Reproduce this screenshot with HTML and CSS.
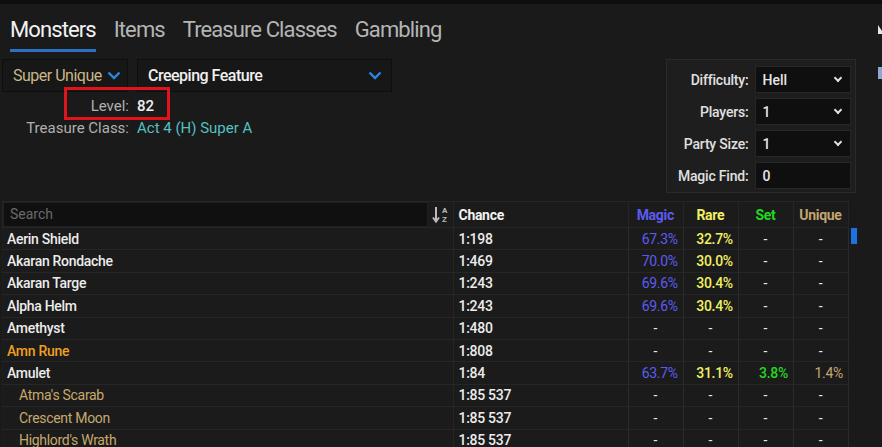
FILE: index.html
```html
<!DOCTYPE html>
<html lang="en">
  <head>
    <meta charset="UTF-8" />
    <meta name="viewport" content="width=device-width, initial-scale=1.0" />
    <title>Drop Calculator</title>
    <link rel="stylesheet" href="styles.css">
  </head>
  <body>
    <div class="topline"></div>
    <nav class="tabs">
      <a class="tab active">Monsters</a>
      <a class="tab">Items</a>
      <a class="tab">Treasure Classes</a>
      <a class="tab">Gambling</a>
    </nav>
    <div class="edge">
      <svg width="5" height="10" viewBox="0 0 5 10"><path d="M0 1 L4 7 V10 H0 Z" fill="#dfe6f0"/></svg>
      <span class="edge-box"></span>
    </div>

    <div class="top">
      <div class="monster">
        <div class="pickers">
          <div class="pick pick-type">
            <span>Super Unique</span>
            <svg width="14" height="9" viewBox="0 0 14 9"><path d="M1.5 1.5 L7 7 L12.5 1.5" fill="none" stroke="#2a86e0" stroke-width="2.4"/></svg>
          </div>
          <div class="pick pick-name">
            <span>Creeping Feature</span>
            <svg width="14" height="9" viewBox="0 0 14 9"><path d="M1.5 1.5 L7 7 L12.5 1.5" fill="none" stroke="#2a86e0" stroke-width="2.4"/></svg>
          </div>
        </div>
        <div class="info">
          <div class="info-row">
            <span class="info-label">Level:</span>
            <span class="info-val">82</span>
            <span class="mark"></span>
          </div>
          <div class="info-row">
            <span class="info-label">Treasure Class:</span>
            <span class="info-val tc">Act 4 (H) Super A</span>
          </div>
        </div>
      </div>

      <div class="settings">
        <div class="set-row">
          <label>Difficulty:</label>
          <div class="sel"><span>Hell</span><i class="chev"></i></div>
        </div>
        <div class="set-row">
          <label>Players:</label>
          <div class="sel"><span>1</span><i class="chev"></i></div>
        </div>
        <div class="set-row">
          <label>Party Size:</label>
          <div class="sel"><span>1</span><i class="chev"></i></div>
        </div>
        <div class="set-row">
          <label>Magic Find:</label>
          <div class="sel"><span>0</span></div>
        </div>
      </div>
    </div>

    <div class="results">
      <table class="drops">
        <colgroup>
          <col class="c-name"><col class="c-chance"><col class="c-q"><col class="c-q"><col class="c-q"><col class="c-q">
        </colgroup>
        <thead>
          <tr>
            <th class="search-cell">
              <div class="search-wrap">
                <div class="search">Search</div>
                <svg class="sort" width="18" height="20" viewBox="0 0 18 20">
                  <path d="M4 2 V16 M1 12.5 L4 16.5 L7 12.5" fill="none" stroke="#bbb" stroke-width="2"/>
                  <text x="10" y="8" font-size="8" font-weight="700" fill="#bbb" font-family="Roboto">A</text>
                  <text x="10" y="17" font-size="8" font-weight="700" fill="#bbb" font-family="Roboto">Z</text>
                </svg>
              </div>
            </th>
            <th class="h-chance">Chance</th>
            <th class="magic">Magic</th>
            <th class="rare">Rare</th>
            <th class="setq">Set</th>
            <th class="uniq">Unique</th>
          </tr>
        </thead>
        <tbody>
          <tr><td>Aerin Shield</td><td class="ch">1:198</td><td class="q magic">67.3%</td><td class="q rare">32.7%</td><td class="q">-</td><td class="q">-</td></tr>
          <tr><td>Akaran Rondache</td><td class="ch">1:469</td><td class="q magic">70.0%</td><td class="q rare">30.0%</td><td class="q">-</td><td class="q">-</td></tr>
          <tr><td>Akaran Targe</td><td class="ch">1:243</td><td class="q magic">69.6%</td><td class="q rare">30.4%</td><td class="q">-</td><td class="q">-</td></tr>
          <tr><td>Alpha Helm</td><td class="ch">1:243</td><td class="q magic">69.6%</td><td class="q rare">30.4%</td><td class="q">-</td><td class="q">-</td></tr>
          <tr><td>Amethyst</td><td class="ch">1:480</td><td class="q">-</td><td class="q">-</td><td class="q">-</td><td class="q">-</td></tr>
          <tr><td class="rune">Amn Rune</td><td class="ch">1:808</td><td class="q">-</td><td class="q">-</td><td class="q">-</td><td class="q">-</td></tr>
          <tr><td>Amulet</td><td class="ch">1:84</td><td class="q magic">63.7%</td><td class="q rare">31.1%</td><td class="q setq">3.8%</td><td class="q uniq">1.4%</td></tr>
          <tr><td class="sub">Atma's Scarab</td><td class="ch">1:85 537</td><td class="q">-</td><td class="q">-</td><td class="q">-</td><td class="q">-</td></tr>
          <tr><td class="sub">Crescent Moon</td><td class="ch">1:85 537</td><td class="q">-</td><td class="q">-</td><td class="q">-</td><td class="q">-</td></tr>
          <tr><td class="sub">Highlord's Wrath</td><td class="ch">1:85 537</td><td class="q">-</td><td class="q">-</td><td class="q">-</td><td class="q">-</td></tr>
        </tbody>
      </table>
      <div class="scroll"><div class="thumb"></div></div>
    </div>
  </body>
</html>
```

FILE: styles.css
```css
* {
  margin: 0;
  padding: 0;
  box-sizing: border-box;
}
body {
  background: #1a1a1a;
  color: #e6e6e6;
  font-family: Roboto, "Liberation Sans", sans-serif;
  width: 882px;
  height: 447px;
  overflow: hidden;
  position: relative;
}
.topline {
  height: 4px;
  background: #0f0f0f;
}
.tabs {
  display: flex;
  gap: 18px;
  padding: 13px 0 0 10px;
  height: 52px;
}
.tab {
  font-size: 22px;
  letter-spacing: -0.9px;
  color: #b4b4b4;
  height: 35px;
  line-height: 26px;
}
.tab.active {
  color: #f2f2f2;
  border-bottom: 3px solid #2d6fc0;
}
.edge {
  position: absolute;
  left: 878px;
  top: 24px;
}
.edge svg {
  display: block;
}
.edge-box {
  display: block;
  margin-top: 33px;
  width: 5px;
  height: 12px;
  background: #8ea6d2;
}

/* top area */
.top {
  display: flex;
  justify-content: space-between;
  padding: 3px 26px 0 2px;
  height: 146px;
}
.pickers {
  display: flex;
  gap: 9px;
}
.pick {
  height: 33px;
  background: #171717;
  border: 1px solid #0e0e0e;
  display: flex;
  align-items: center;
  justify-content: space-between;
  font-size: 16px;
  font-weight: 500;
  letter-spacing: -0.5px;
}
.pick-type {
  width: 126px;
  padding: 0 6px 0 10px;
  color: #c9b685;
  font-weight: 400;
}
.pick-name {
  width: 255px;
  padding: 0 9px 0 10px;
  color: #f0f0f0;
}
.info {
  padding-top: 3px;
}
.info-row {
  display: flex;
  gap: 8px;
  height: 22px;
  align-items: center;
  font-size: 15px;
  position: relative;
}
.info-label {
  width: 127px;
  text-align: right;
  color: #b0b0b0;
}
.info-val {
  color: #f0f0f0;
  font-weight: 500;
}
.info-val.tc {
  color: #55c0c0;
  font-weight: 400;
}
.mark {
  position: absolute;
  left: 62px;
  top: -8px;
  width: 106px;
  height: 33px;
  border: 3px solid #e0141a;
}

.settings {
  width: 190px;
  height: 134px;
  background: #1e1e1e;
  border: 1px solid #2a2a2a;
  padding: 6px 4px 0 0;
  display: flex;
  flex-direction: column;
  gap: 5px;
}
.set-row {
  display: flex;
  align-items: center;
  gap: 7px;
}
.set-row label {
  width: 82px;
  text-align: right;
  font-size: 14px;
  font-weight: 500;
  letter-spacing: -0.2px;
  color: #e0e0e0;
}
.sel {
  width: 96px;
  height: 27px;
  background: #0f0f0f;
  border: 1px solid #262626;
  display: flex;
  align-items: center;
  justify-content: space-between;
  padding: 0 9px 0 6px;
  font-size: 14px;
  font-weight: 500;
  color: #e6e6e6;
}
.chev {
  width: 6px;
  height: 6px;
  border-right: 2px solid #ddd;
  border-bottom: 2px solid #ddd;
  transform: rotate(45deg);
  margin-top: -4px;
}

/* results table */
.results {
  display: flex;
  padding-left: 2px;
  margin-top: -1px;
}
.drops {
  border-collapse: collapse;
  table-layout: fixed;
  width: 847px;
  background: #1b1b1b;
  font-size: 14px;
}
.c-name { width: 450px; }
.c-chance { width: 175px; }
.c-q { width: 55px; }
.drops th,
.drops td {
  border: 1px solid #262626;
  height: 22.4px;
  padding: 0 5px 0 4px;
  white-space: nowrap;
  letter-spacing: -0.3px;
}
.drops td {
  font-weight: 500;
  color: #ececec;
  border-left-color: #1d1d1d;
  border-right-color: #2b2b2b;
}
.drops td:first-child {
  border-right-color: #262626;
}
.drops th {
  height: 26px;
  font-weight: 700;
  text-align: center;
  font-size: 14px;
}
.drops th.h-chance {
  text-align: left;
  color: #f2f2f2;
  padding-left: 5px;
}
.search-cell {
  padding: 0 !important;
}
.search-wrap {
  display: flex;
  align-items: center;
  height: 25px;
}
.search {
  flex: 1;
  height: 25px;
  background: #101010;
  border: 1px solid #202020;
  color: #6a6a6a;
  font-weight: 400;
  font-size: 14px;
  text-align: left;
  line-height: 23px;
  padding-left: 6px;
  letter-spacing: 0;
}
.sort {
  margin: 0 3px 0 4px;
}
.ch {
  padding-left: 5px !important;
}
.q {
  text-align: center;
  color: #5e5e5e;
  font-weight: 400 !important;
}
.drops .magic { color: #5b5bf0; }
.drops .rare { color: #f0f060; }
.drops .setq { color: #22d822; }
.drops .uniq { color: #c4a670; }
.drops td.magic,
.drops td.rare,
.drops td.setq,
.drops td.uniq {
  text-align: right;
  padding-left: 0;
  padding-right: 5px;
}
.drops td.rare,
.drops td.setq { font-weight: 500 !important; }
.rune { color: #f0a020 !important; }
.sub {
  color: #c7a96c !important;
  padding-left: 16px !important;
  font-weight: 400 !important;
}
.scroll {
  width: 8px;
  margin-left: 2px;
  padding-top: 27px;
}
.thumb {
  width: 6px;
  height: 16px;
  background: #1a73e0;
}
```
